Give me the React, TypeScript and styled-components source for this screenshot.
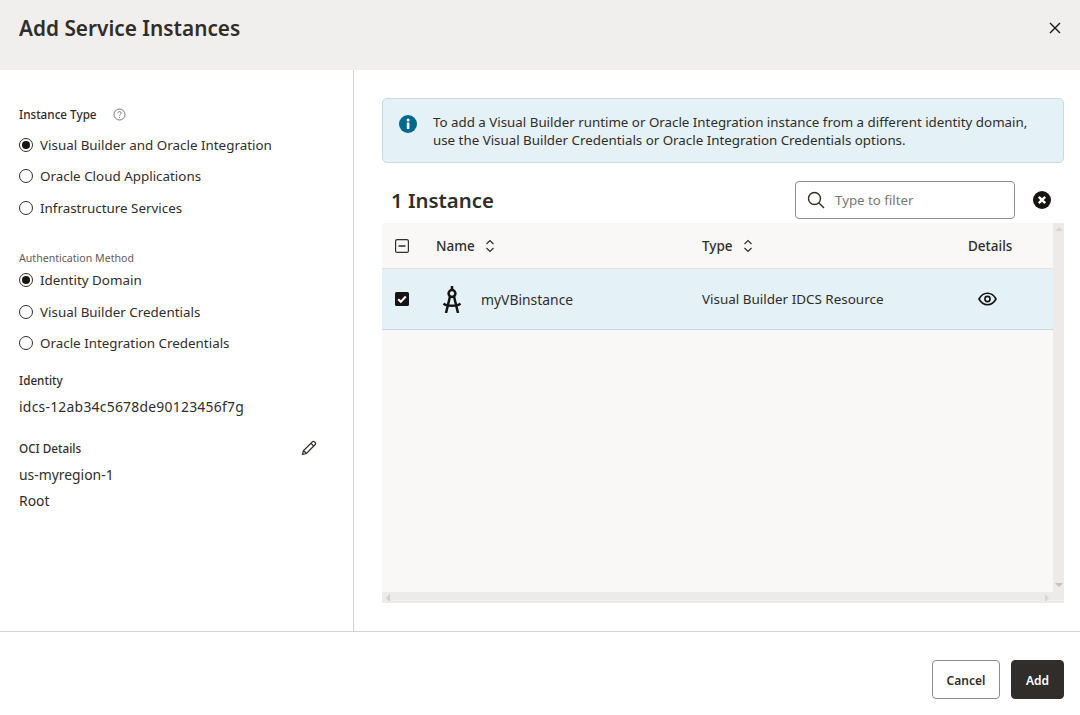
import React from "react";
import styled, { createGlobalStyle } from "styled-components";

const Global = createGlobalStyle`
  html, body { margin: 0; padding: 0; background: #fff; }
  body { font-family: "Noto Sans", "Open Sans", sans-serif; color: #312d2a; }
  * { box-sizing: border-box; }
`;

const Dialog = styled.div`
  width: 1080px; height: 715px; display: flex; flex-direction: column; overflow: hidden; background: #fff;
`;
const Header = styled.header`
  height: 70px; flex: none; background: #f1efed; display: flex; align-items: center; justify-content: space-between;
  padding: 0 17px 14px 19px;
`;
const Title = styled.h1`
  margin: 0; font-size: 20.8px; line-height: 28px; font-weight: 600; color: #312d2a;
`;
const IconButton = styled.button`
  border: 0; background: none; padding: 0; display: flex; color: #161513;
`;
const Body = styled.div`
  flex: 1; display: flex; min-height: 0;
`;
const Side = styled.aside`
  width: 354px; flex: none; border-right: 1px solid #d5d3d1; padding: 36px 36px 0 19px; display: flex; flex-direction: column;
`;
const FieldLabel = styled.div<{ $muted?: boolean }>`
  font-size: ${p => (p.$muted ? "10.6px" : "11.7px")};
  line-height: ${p => (p.$muted ? "14px" : "16px")};
  padding-bottom: ${p => (p.$muted ? "0" : "2px")};
  font-weight: ${p => (p.$muted ? 400 : 500)};
  color: ${p => (p.$muted ? "#5f5c59" : "#312d2a")}; display: flex; align-items: center; justify-content: space-between;
`;
const LabelWithHelp = styled.div`
  display: flex; align-items: center; gap: 16px;
`;
const RadioGroup = styled.div<{ $mt?: number; $mb: number }>`
  display: flex; flex-direction: column; margin-top: ${p => p.$mt ?? 0}px; margin-bottom: ${p => p.$mb}px;
`;
const RadioRow = styled.label`
  height: 31.5px; display: flex; align-items: center; gap: 7px; font-size: 13.4px; color: #312d2a;
`;
const RadioDot = styled.span<{ $on?: boolean }>`
  width: 14px; height: 14px; border-radius: 50%; border: 1px solid #312d2a; display: flex; align-items: center; justify-content: center; flex: none;
  &::after { content: ""; width: 8px; height: 8px; border-radius: 50%; background: ${p => (p.$on ? "#161513" : "transparent")}; }
`;
const Values = styled.div`
  padding-top: 4px;
`;
const Value = styled.div<{ $wide?: boolean }>`
  font-size: 13.9px; line-height: 25.5px; color: #312d2a;
  letter-spacing: ${p => (p.$wide ? "0.25px" : "0")};
`;
const Section = styled.section<{ $mb: number }>`
  margin-bottom: ${p => p.$mb}px;
`;
const Main = styled.main`
  flex: 1; min-width: 0; padding: 28px 16px 28px 28px; display: flex; flex-direction: column;
`;
const Info = styled.div`
  height: 65px; flex: none; background: #e4f1f7; border: 1px solid #cbd9df; border-radius: 5px; display: flex; padding: 13px 15px 13px 16px; gap: 16px;
`;
const InfoText = styled.p`
  margin: 1px 0 0; font-size: 13.33px; line-height: 18px; color: #312d2a;
`;
const InfoIcon = styled.span`
  display: flex; padding-top: 3px; color: #00688c;
`;
const Toolbar = styled.div`
  height: 38px; flex: none; margin: 18px 0 4px; display: flex; align-items: center; padding-left: 9px;
`;
const Count = styled.h2`
  margin: 0; font-size: 20.4px; font-weight: 600; color: #312d2a; flex: 1;
`;
const Filter = styled.div`
  width: 220px; height: 38px; border: 1px solid #8f8c89; border-radius: 4px; display: flex; align-items: center; gap: 10px; padding: 0 10px 0 11px; margin-right: 18px;
`;
const FilterHint = styled.span`
  font-size: 13.3px; color: #7a7774;
`;
const ClearIcon = styled.span`
  display: flex; margin-right: 13px;
`;
const TableWrap = styled.div`
  flex: 1; min-height: 0; display: grid; grid-template-columns: 1fr 11px; grid-template-rows: 1fr 11px; background: #ecebe9;
`;
const TableArea = styled.div`
  background: #f9f8f6; min-width: 0;
`;
const Row = styled.div<{ $head?: boolean }>`
  display: grid; grid-template-columns: 54px 266px 266px 1fr; align-items: center;
  height: ${p => (p.$head ? "46px" : "61px")};
  background: ${p => (p.$head ? "#f9f8f6" : "#e4f1f7")};
  border-bottom: 1px solid ${p => (p.$head ? "#e4e2e0" : "#cbd9df")};
  font-size: 13.3px; color: #312d2a;
`;
const Cell = styled.div<{ $head?: boolean; $gap?: number; $pl?: number; $size?: number }>`
  display: flex; align-items: center; gap: ${p => p.$gap ?? 0}px; padding-left: ${p => p.$pl ?? 0}px;
  font-weight: ${p => (p.$head ? 500 : 400)};
  ${p => (p.$head ? "font-size: 13.5px;" : "")}
  ${p => (p.$size ? `font-size: ${p.$size}px;` : "")}
`;
const Check = styled.span`
  width: 14px; height: 14px; display: flex; margin-left: 13px;
`;
const Track = styled.div<{ $dir: "col" | "row" }>`
  background: #ecebe9; display: flex; align-items: center; justify-content: space-between;
  flex-direction: ${p => (p.$dir === "col" ? "column" : "row")};
  padding: ${p => (p.$dir === "col" ? "4px 0 5px" : "0 4px 0 4px")};
`;
const Arrow = styled.span<{ $d: "up" | "down" | "left" | "right" }>`
  width: 0; height: 0; border-style: solid; border-color: transparent;
  ${p => (p.$d === "up" ? "border-width: 0 4px 4px; border-bottom-color: #d8d6d4;" : "")}
  ${p => (p.$d === "down" ? "border-width: 4px 4px 0; border-top-color: #c4c2c0;" : "")}
  ${p => (p.$d === "left" ? "border-width: 4px 4px 4px 0; border-right-color: #d2d0ce;" : "")}
  ${p => (p.$d === "right" ? "border-width: 4px 0 4px 4px; border-left-color: #d8d6d4;" : "")}
`;
const Corner = styled.div`
  background: #ecebe9;
`;
const Footer = styled.footer`
  height: 84px; flex: none; border-top: 1px solid #d5d3d1; display: flex; justify-content: flex-end; align-items: flex-start; gap: 11px; padding: 28px 16px 0 0;
`;
const Btn = styled.button<{ $primary?: boolean }>`
  height: 39px; border-radius: 4px; font-family: inherit; font-size: 12px; font-weight: 600; padding: 1px 0 0;
  width: ${p => (p.$primary ? "53px" : "68px")};
  background: ${p => (p.$primary ? "#312d2a" : "#fff")};
  color: ${p => (p.$primary ? "#fff" : "#312d2a")};
  border: 1px solid ${p => (p.$primary ? "#312d2a" : "#8f8c89")};
`;

const Radio = ({ on, children }: { on?: boolean; children: React.ReactNode }) => (
  <RadioRow><RadioDot $on={on} />{children}</RadioRow>
);
const Sort = () => (
  <svg width="10" height="14" viewBox="0 0 10 14" fill="none" stroke="#312d2a" strokeWidth="1.2">
    <path d="M1.500 5 5 1.500 8.500 5M1.500 9 5 12.500 8.500 9" />
  </svg>
);

export default function App() {
  return (
    <Dialog>
      <Global />
      <Header>
        <Title>Add Service Instances</Title>
        <IconButton aria-label="Close">
          <svg width="16" height="16" viewBox="0 0 16 16" fill="none" stroke="currentColor" strokeWidth="1.4">
            <path d="M3 3l10 10M13 3 3 13" />
          </svg>
        </IconButton>
      </Header>
      <Body>
        <Side>
          <FieldLabel>
            <LabelWithHelp>
              Instance Type
              <svg width="13" height="13" viewBox="0 0 13 13" fill="none" stroke="#7a7774" strokeWidth="1">
                <circle cx="6.5" cy="6.5" r="5.5" />
                <path d="M4.800 5.200c0-1 .8-1.600 1.700-1.600s1.700.6 1.700 1.500c0 1.300-1.700 1.300-1.700 2.600" />
                <path d="M6.500 9v1" />
              </svg>
            </LabelWithHelp>
          </FieldLabel>
          <RadioGroup $mt={5} $mb={27}>
            <Radio on>Visual Builder and Oracle Integration</Radio>
            <Radio>Oracle Cloud Applications</Radio>
            <Radio>Infrastructure Services</Radio>
          </RadioGroup>
          <FieldLabel $muted>Authentication Method</FieldLabel>
          <RadioGroup $mb={13}>
            <Radio on>Identity Domain</Radio>
            <Radio>Visual Builder Credentials</Radio>
            <Radio>Oracle Integration Credentials</Radio>
          </RadioGroup>
          <Section $mb={20.5}>
            <FieldLabel>Identity</FieldLabel>
            <Values>
              <Value $wide>idcs-12ab34c5678de90123456f7g</Value>
            </Values>
          </Section>
          <Section $mb={0}>
            <FieldLabel>
              OCI Details
              <svg width="16" height="16" viewBox="0 0 16 16" fill="none" stroke="#312d2a" strokeWidth="1.2">
                <path d="M1.500 14.500 2.500 10.500 11.500 1.800c.6-.6 1.400-.6 2 0l.7.7c.6.6.6 1.400 0 2L5.500 13.500z" />
                <path d="M10 3.300l2.700 2.700M2.500 10.500l3 3" />
              </svg>
            </FieldLabel>
            <Values>
              <Value>us-myregion-1</Value>
              <Value>Root</Value>
            </Values>
          </Section>
        </Side>
        <Main>
          <Info>
            <InfoIcon>
              <svg width="18" height="18" viewBox="0 0 18 18">
                <circle cx="9" cy="9" r="9" fill="currentColor" />
                <rect x="7.800" y="7.500" width="2.600" height="6.500" fill="#fff" />
                <circle cx="9.100" cy="4.900" r="1.500" fill="#fff" />
              </svg>
            </InfoIcon>
            <InfoText>
              To add a Visual Builder runtime or Oracle Integration instance from a different identity domain,
              <br />
              use the Visual Builder Credentials or Oracle Integration Credentials options.
            </InfoText>
          </Info>
          <Toolbar>
            <Count>1 Instance</Count>
            <Filter>
              <svg width="18" height="18" viewBox="0 0 18 18" fill="none" stroke="#312d2a" strokeWidth="1.4">
                <circle cx="7.500" cy="7.500" r="6" />
                <path d="M12 12 17 17" />
              </svg>
              <FilterHint>Type to filter</FilterHint>
            </Filter>
            <ClearIcon>
              <svg width="18" height="18" viewBox="0 0 18 18">
                <circle cx="9" cy="9" r="9" fill="#161513" />
                <path d="M5.800 5.800l6.400 6.400M12.200 5.800l-6.400 6.400" stroke="#fff" strokeWidth="2.400" />
              </svg>
            </ClearIcon>
          </Toolbar>
          <TableWrap>
            <TableArea>
              <Row $head>
                <Cell>
                  <Check>
                    <svg width="14" height="14" viewBox="0 0 14 14" fill="none" stroke="#312d2a" strokeWidth="1.200">
                      <rect x=".6" y=".6" width="12.800" height="12.800" rx="1.500" />
                      <path d="M3.500 7h7" strokeWidth="1.500" />
                    </svg>
                  </Check>
                </Cell>
                <Cell $head $gap={10}>Name <Sort /></Cell>
                <Cell $head $gap={10}>Type <Sort /></Cell>
                <Cell $head>Details</Cell>
              </Row>
              <Row>
                <Cell>
                  <Check>
                    <svg width="14" height="14" viewBox="0 0 14 14">
                      <rect width="14" height="14" rx="1.500" fill="#161513" />
                      <path d="M3.200 7.200 5.800 9.800 10.800 4.500" fill="none" stroke="#fff" strokeWidth="2" />
                    </svg>
                  </Check>
                </Cell>
                <Cell $gap={20} $pl={7} $size={13.9}>
                  <svg width="18" height="27" viewBox="0 0 18 27" fill="none" stroke="#161513" strokeWidth="2.500">
                    <path d="M9 0v4" />
                    <circle cx="9" cy="7.500" r="3.400" />
                    <path d="M7 10.500 3 27M11 10.500 15 27" />
                    <path d="M0.500 17.500C3 20.500 15 20.500 17.500 17.500" />
                  </svg>
                  myVBinstance
                </Cell>
                <Cell $size={13.45}>Visual Builder IDCS Resource</Cell>
                <Cell $pl={10}>
                  <svg width="19" height="14" viewBox="0 0 19 14" fill="none" stroke="#161513" strokeWidth="1.600">
                    <path d="M1 7c2-3.700 5-5.700 8.500-5.700S16 3.300 18 7c-2 3.700-5 5.700-8.500 5.700S3 10.700 1 7z" />
                    <circle cx="9.500" cy="7" r="2.600" />
                  </svg>
                </Cell>
              </Row>
            </TableArea>
            <Track $dir="col"><Arrow $d="up" /><Arrow $d="down" /></Track>
            <Track $dir="row"><Arrow $d="left" /><Arrow $d="right" /></Track>
            <Corner />
          </TableWrap>
        </Main>
      </Body>
      <Footer>
        <Btn>Cancel</Btn>
        <Btn $primary>Add</Btn>
      </Footer>
    </Dialog>
  );
}
